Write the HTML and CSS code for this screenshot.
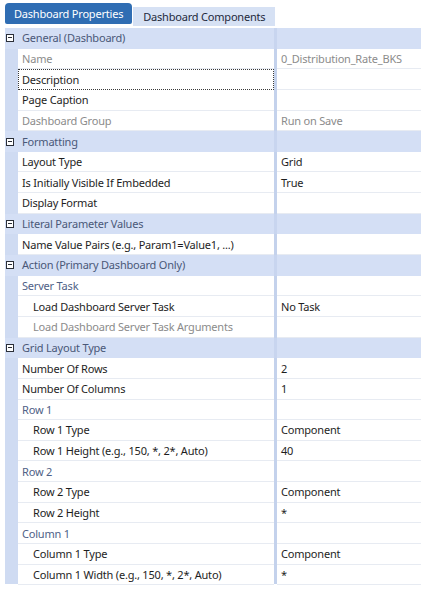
FILE: index.html
```html
<!DOCTYPE html>
<html lang="en">
<head>
<meta charset="utf-8">
<title>Dashboard Properties</title>
<link rel="stylesheet" href="styles.css">
</head>
<body>
<div class="panel">
  <div class="tabs">
    <div class="tab tab-active">Dashboard Properties</div>
    <div class="tab">Dashboard Components</div>
  </div>

  <div class="grid">
    <div class="row cat"><span class="gutter"><span class="toggle"></span></span><span class="name">General (Dashboard)</span><span class="split"></span><span class="value"></span></div>
    <div class="row"><span class="gutter"></span><span class="name muted">Name</span><span class="split"></span><span class="value muted">0_Distribution_Rate_BKS</span></div>
    <div class="row focused"><span class="gutter"></span><span class="name">Description</span><span class="split"></span><span class="value"></span></div>
    <div class="row"><span class="gutter"></span><span class="name">Page Caption</span><span class="split"></span><span class="value"></span></div>
    <div class="row"><span class="gutter"></span><span class="name muted">Dashboard Group</span><span class="split"></span><span class="value muted">Run on Save</span></div>

    <div class="row cat"><span class="gutter"><span class="toggle"></span></span><span class="name">Formatting</span><span class="split"></span><span class="value"></span></div>
    <div class="row"><span class="gutter"></span><span class="name">Layout Type</span><span class="split"></span><span class="value">Grid</span></div>
    <div class="row"><span class="gutter"></span><span class="name">Is Initially Visible If Embedded</span><span class="split"></span><span class="value">True</span></div>
    <div class="row"><span class="gutter"></span><span class="name">Display Format</span><span class="split"></span><span class="value"></span></div>

    <div class="row cat"><span class="gutter"><span class="toggle"></span></span><span class="name">Literal Parameter Values</span><span class="split"></span><span class="value"></span></div>
    <div class="row"><span class="gutter"></span><span class="name">Name Value Pairs (e.g., Param1=Value1, ...)</span><span class="split"></span><span class="value"></span></div>

    <div class="row cat"><span class="gutter"><span class="toggle"></span></span><span class="name">Action (Primary Dashboard Only)</span><span class="split"></span><span class="value"></span></div>
    <div class="row group"><span class="gutter"></span><span class="name">Server Task</span><span class="split"></span><span class="value"></span></div>
    <div class="row sub"><span class="gutter"></span><span class="name">Load Dashboard Server Task</span><span class="split"></span><span class="value">No Task</span></div>
    <div class="row sub"><span class="gutter"></span><span class="name muted">Load Dashboard Server Task Arguments</span><span class="split"></span><span class="value"></span></div>

    <div class="row cat"><span class="gutter"><span class="toggle"></span></span><span class="name">Grid Layout Type</span><span class="split"></span><span class="value"></span></div>
    <div class="row"><span class="gutter"></span><span class="name">Number Of Rows</span><span class="split"></span><span class="value">2</span></div>
    <div class="row"><span class="gutter"></span><span class="name">Number Of Columns</span><span class="split"></span><span class="value">1</span></div>
    <div class="row group"><span class="gutter"></span><span class="name">Row 1</span><span class="split"></span><span class="value"></span></div>
    <div class="row sub"><span class="gutter"></span><span class="name">Row 1 Type</span><span class="split"></span><span class="value">Component</span></div>
    <div class="row sub"><span class="gutter"></span><span class="name">Row 1 Height (e.g., 150, *, 2*, Auto)</span><span class="split"></span><span class="value">40</span></div>
    <div class="row group"><span class="gutter"></span><span class="name">Row 2</span><span class="split"></span><span class="value"></span></div>
    <div class="row sub"><span class="gutter"></span><span class="name">Row 2 Type</span><span class="split"></span><span class="value">Component</span></div>
    <div class="row sub"><span class="gutter"></span><span class="name">Row 2 Height</span><span class="split"></span><span class="value">*</span></div>
    <div class="row group"><span class="gutter"></span><span class="name">Column 1</span><span class="split"></span><span class="value"></span></div>
    <div class="row sub"><span class="gutter"></span><span class="name">Column 1 Type</span><span class="split"></span><span class="value">Component</span></div>
    <div class="row sub last"><span class="gutter"></span><span class="name">Column 1 Width (e.g., 150, *, 2*, Auto)</span><span class="split"></span><span class="value">*</span></div>
  </div>
</div>
</body>
</html>
```

FILE: styles.css
```css
html, body {
  margin: 0;
  padding: 0;
  background: #ffffff;
}

body {
  font-family: "Noto Sans", "Open Sans", sans-serif;
  font-size: 11px;
  letter-spacing: -0.2px;
  color: #1e1e1e;
  overflow: hidden;
}

.panel {
  padding: 3px 0 0 5px;
}

/* tab strip */
.tabs {
  display: flex;
  align-items: flex-start;
  gap: 1px;
  height: 25px;
}

.tab {
  box-sizing: border-box;
  height: 19px;
  margin-top: 4px;
  padding: 0 10px;
  display: flex;
  align-items: center;
  background: #d6e1f4;
  color: #1e2a3c;
  white-space: nowrap;
}

.tab-active {
  height: 21px;
  margin-top: 0;
  padding: 0 9px;
  background: #2f6db3;
  color: #ffffff;
  border-radius: 4px 4px 2px 2px;
}

/* property grid */
.grid {
  display: flex;
  flex-direction: column;
}

.row {
  display: flex;
  height: 20.65px;
}

.row > span {
  box-sizing: border-box;
  display: flex;
  align-items: center;
  white-space: nowrap;
  overflow: hidden;
}

.gutter {
  flex: 0 0 13px;
  background: #cfdbf2;
  justify-content: center;
}

.name {
  flex: 0 0 256px;
  padding-left: 4px;
  border-bottom: 1px solid #e7ebf2;
}

.split {
  flex: 0 0 3px;
  background: #c4d2ec;
}

.value {
  flex: 1 1 auto;
  padding-left: 4px;
  border-bottom: 1px solid #e7ebf2;
}

.muted {
  color: #8b8b8b;
}

/* category header rows */
.cat > span {
  background: #d4dff5;
  border-bottom-color: #d4dff5;
  color: #4a5878;
}

.cat > .split {
  background: #c8d5ef;
}

.toggle {
  position: relative;
  box-sizing: border-box;
  width: 8px;
  height: 8px;
  border: 1px solid #2b2f38;
  background: #ffffff;
  margin-left: -3px;
}

.toggle::after {
  content: "";
  position: absolute;
  left: 1px;
  right: 1px;
  top: 2px;
  height: 1px;
  background: #2b2f38;
}

/* nested group labels and their children */
.group > .name {
  color: #4f6186;
}

.sub > .name {
  padding-left: 15px;
}

/* keyboard focus rectangle */
.focused > .name {
  border: 1px dotted #3a3a3a;
  padding-left: 3px;
}

.last > .gutter,
.last > .split {
  height: 19px;
}
```
